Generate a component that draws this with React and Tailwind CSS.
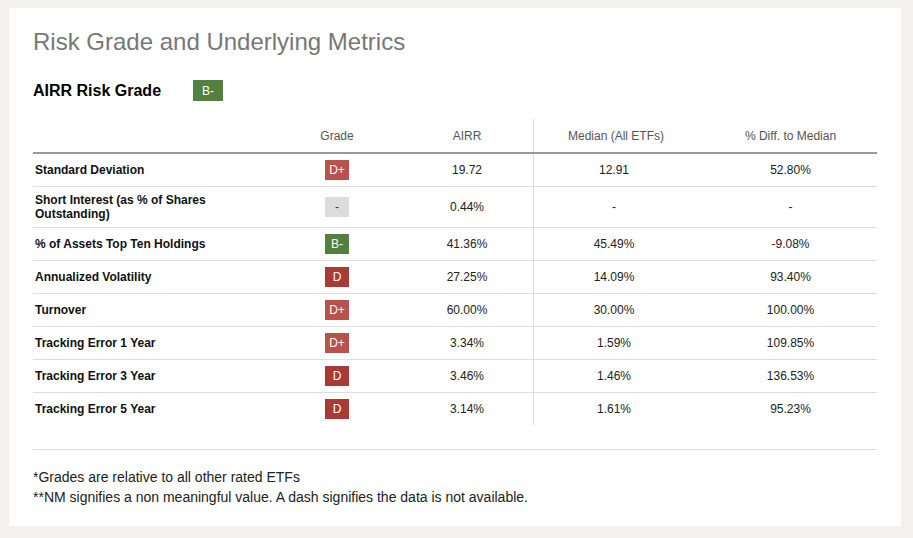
import React from "react";

const rows = [
  { label: "Standard Deviation", grade: "D+", airr: "19.72", median: "12.91", diff: "52.80%" },
  { label: "Short Interest (as % of Shares Outstanding)", grade: "-", airr: "0.44%", median: "-", diff: "-" },
  { label: "% of Assets Top Ten Holdings", grade: "B-", airr: "41.36%", median: "45.49%", diff: "-9.08%" },
  { label: "Annualized Volatility", grade: "D", airr: "27.25%", median: "14.09%", diff: "93.40%" },
  { label: "Turnover", grade: "D+", airr: "60.00%", median: "30.00%", diff: "100.00%" },
  { label: "Tracking Error 1 Year", grade: "D+", airr: "3.34%", median: "1.59%", diff: "109.85%" },
  { label: "Tracking Error 3 Year", grade: "D", airr: "3.46%", median: "1.46%", diff: "136.53%" },
  { label: "Tracking Error 5 Year", grade: "D", airr: "3.14%", median: "1.61%", diff: "95.23%" },
];

function Badge({ g }) {
  let cls = "bg-[#dcdcdc] text-[#333]";
  if (g === "D+") cls = "bg-[#b9514c] text-white";
  else if (g === "D") cls = "bg-[#a93a35] text-white";
  else if (g === "B-") cls = "bg-[#52803f] text-white";
  return (
    <span className={`inline-flex h-[20px] w-[24px] items-center justify-center text-[12px] ${cls}`}>{g}</span>
  );
}

export default function App() {
  return (
    <div
      className="min-h-screen bg-[#f2f1ef] pl-[9px] pt-[8px]"
      style={{ fontFamily: '"Liberation Sans", Arial, sans-serif' }}
    >
      <div className="h-[518px] w-[892px] bg-white px-[24px] pt-[20px]">
        <h1 className="text-[24px] leading-[28px] text-[#777]">Risk Grade and Underlying Metrics</h1>
        <div className="mt-[24px] flex h-[21px] items-center">
          <span className="w-[160px] text-[16px] font-bold text-black">AIRR Risk Grade</span>
          <span className="inline-flex h-[21px] w-[30px] items-center justify-center bg-[#52803f] text-[12px] text-white">B-</span>
        </div>

        <div className="mt-[18px] w-[844px] text-[12px]">
          <div className="grid h-[35px] grid-cols-[240px_128px_132px_171px_173px] border-b-2 border-[#999] text-[#555]">
            <div />
            <div className="flex items-center justify-center">Grade</div>
            <div className="flex items-center justify-center">AIRR</div>
            <div className="flex items-center justify-center border-l border-[#ddd] pr-[6px]">Median (All ETFs)</div>
            <div className="flex items-center justify-center">% Diff. to Median</div>
          </div>
          {rows.map((r, i) => (
            <div
              key={i}
              className={`grid grid-cols-[240px_128px_132px_171px_173px] ${i < rows.length - 1 ? "border-b border-[#ddd]" : ""}`}
            >
              <div className="flex items-center py-[6px] pl-[2px] pr-[40px] font-bold leading-[14px] text-[#111]">
                {r.label}
              </div>
              <div className="flex items-center justify-center py-[6px]">
                <Badge g={r.grade} />
              </div>
              <div className="flex items-center justify-center text-[#222]">{r.airr}</div>
              <div className="flex items-center justify-center border-l border-[#ddd] pr-[10px] text-[#222]">{r.median}</div>
              <div className="flex items-center justify-center text-[#222]">{r.diff}</div>
            </div>
          ))}
        </div>

        <div className="mt-[24px] w-[844px] border-t border-[#ddd]" />
        <div className="mt-[17px] text-[14px] leading-[20px] text-[#222]">
          <p>*Grades are relative to all other rated ETFs</p>
          <p>**NM signifies a non meaningful value. A dash signifies the data is not available.</p>
        </div>
      </div>
    </div>
  );
}
